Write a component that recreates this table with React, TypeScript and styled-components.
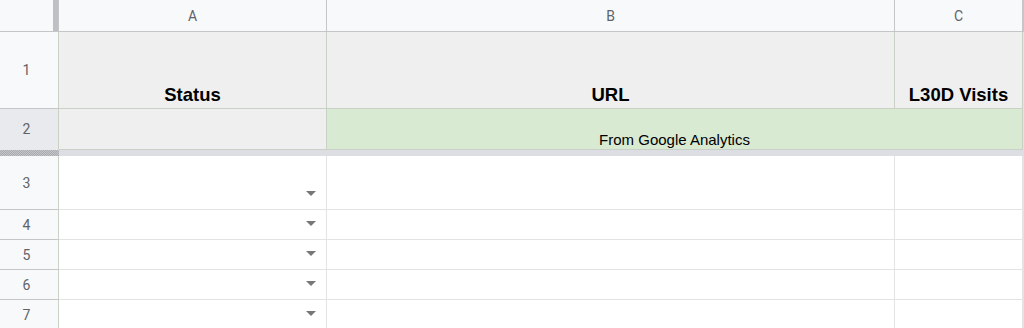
import styled, { createGlobalStyle } from "styled-components";

const C = {
  head: "#f8f9fa",
  headActive: "#e8eaed",
  headLine: "#c4c7c5",
  frozenLine: "#c9d0c6",
  grid: "#e2e3e3",
  gray: "#efefef",
  green: "#d9ead3",
  label: "#5f6368",
  arrow: "#777",
};

const Global = createGlobalStyle`
  html, body { margin:0; padding:0; background:#fff; overflow:hidden; }
  body { font-family:"Liberation Sans", Arial, sans-serif; }
`;

const Sheet = styled.div`
  display:grid;
  grid-template-columns:59px 268px 568px 128px 1fr;
  grid-template-rows:32px 77px 41px 6px 54px repeat(4, 30px);
  width:1024px; height:328px; overflow:hidden;
  > * { box-sizing:border-box; min-width:0; }
`;

const Corner = styled.div`
  display:flex; justify-content:flex-end;
  background:${C.head};
  border-right:1px solid ${C.headLine};
  border-bottom:1px solid ${C.headLine};
`;

const Handle = styled.div`
  width:5px; height:100%; background:#bdc1c6;
`;

const ColHead = styled.div`
  display:flex; align-items:center; justify-content:center;
  background:${C.head};
  border-right:1px solid ${C.headLine};
  border-bottom:1px solid ${C.headLine};
  font-family:Roboto, "Liberation Sans", sans-serif; font-size:14px; color:${C.label};
`;

const RowHead = styled.div<{ $active?: boolean }>`
  display:flex; align-items:center; justify-content:center; padding-right:5px;
  background:${p => p.$active ? C.headActive : C.head};
  border-right:1px solid ${C.frozenLine};
  border-bottom:1px solid ${p => p.$active ? "transparent" : C.headLine};
  font-family:Roboto, "Liberation Sans", sans-serif; font-size:14px; color:${C.label};
`;

type Tone = "white" | "gray" | "green";

const Cell = styled.div<{ $tone?: Tone; $span?: number; $pad?: number }>`
  display:flex; align-items:flex-end; justify-content:center;
  grid-column:span ${p => p.$span ?? 1};
  padding-bottom:${p => p.$pad ?? 0}px;
  background:${p => p.$tone === "gray" ? C.gray : p.$tone === "green" ? C.green : "#fff"};
  border-right:1px solid ${p => p.$tone && p.$tone !== "white" ? C.frozenLine : C.grid};
  border-bottom:1px solid ${p => p.$tone && p.$tone !== "white" ? C.frozenLine : C.grid};
  color:#000;
`;

const DropCell = styled(Cell)`
  justify-content:flex-end; padding:0 10px 13px 0;
`;

const Title = styled.span`
  font-weight:700; font-size:18.5px; white-space:nowrap;
`;

const Note = styled.span`
  font-size:15px; white-space:nowrap;
`;

const FreezeBar = styled.div<{ $head?: boolean; $span?: number }>`
  grid-column:span ${p => p.$span ?? 1};
  background:${p => p.$head
    ? "repeating-conic-gradient(#a9abae 0 25%, #c3c5c8 0 50%) 0 0 / 2px 2px"
    : "#dcdee3"};
`;

function Arrow() {
  return (
    <svg width="10" height="5" viewBox="0 0 10 5">
      <path d="M0 0h10L5 5z" fill={C.arrow} />
    </svg>
  );
}

const bodyRows = [3, 4, 5, 6, 7];

export default function App() {
  return (
    <>
      <Global />
      <Sheet>
        <Corner><Handle /></Corner>
        <ColHead>A</ColHead>
        <ColHead>B</ColHead>
        <ColHead>C</ColHead>
        <ColHead />

        <RowHead>1</RowHead>
        <Cell $tone="gray" $pad={2}><Title>Status</Title></Cell>
        <Cell $tone="gray" $pad={2}><Title>URL</Title></Cell>
        <Cell $tone="gray" $pad={2}><Title>L30D Visits</Title></Cell>
        <Cell />

        <RowHead $active>2</RowHead>
        <Cell $tone="gray" />
        <Cell $tone="green" $span={2} $pad={1}><Note>From Google Analytics</Note></Cell>
        <Cell />

        <FreezeBar $head />
        <FreezeBar $span={4} />

        {bodyRows.map(n => (
          <RowLine key={n} n={n} />
        ))}
      </Sheet>
    </>
  );
}

function RowLine({ n }: { n: number }) {
  return (
    <>
      <RowHead>{n}</RowHead>
      <DropCell><Arrow /></DropCell>
      <Cell />
      <Cell />
      <Cell />
    </>
  );
}
